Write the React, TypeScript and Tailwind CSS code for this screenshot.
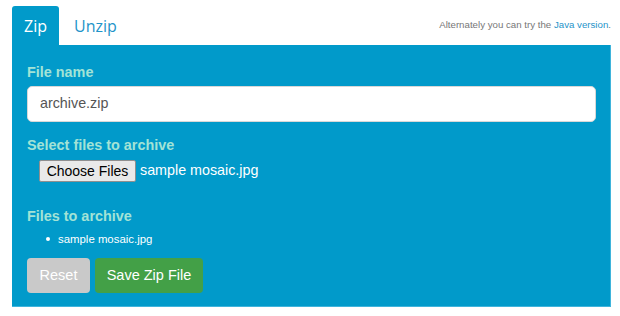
import React from "react";

export default function App() {
  return (
    <div className="w-[620px] h-[316px] bg-white relative" style={{ fontFamily: '"Liberation Sans", Arial, sans-serif' }}>
      <div className="pt-[6px] pl-[12px] pr-[9px]">
        <div className="flex items-end h-[39px]">
          <div className="w-[47px] h-[39px] bg-[#019aca] rounded-t-[3px] flex items-center justify-center text-white text-[16px]" style={{ fontFamily: '"Open Sans", sans-serif' }}>
            Zip
          </div>
          <div className="h-[39px] flex items-center pl-[15px] text-[#1f94c9] text-[16px]" style={{ fontFamily: '"Open Sans", sans-serif' }}>
            Unzip
          </div>
          <div className="flex-1" />
          <div className="h-[39px] flex items-center text-[9.7px] text-[#777] pb-[1px]">
            Alternately you can try the&nbsp;<span className="text-[#1f94c9]">Java version</span>.
          </div>
        </div>
        <div className="bg-[#019aca] h-[262px] border-r border-b border-[#3fb4dc] px-[15px] pt-[19px]">
          <div className="text-[#a3e3d6] font-bold text-[14.4px] leading-[16px]">File name</div>
          <div className="mt-[6px] h-[36px] w-[569px] bg-white rounded-[5px] border border-[#d8d8d8] flex items-center pl-[12px] text-[14.3px] text-[#555]">
            archive.zip
          </div>
          <div className="mt-[15px] text-[#a3e3d6] font-bold text-[14.4px] leading-[16px]">Select files to archive</div>
          <div className="mt-[7px] ml-[12px] flex items-center">
            <div className="h-[22px] w-[97px] bg-[#e9e9e9] border border-[#8f8f8f] rounded-[2px] flex items-center justify-center text-[14px] text-black">
              Choose Files
            </div>
            <div className="ml-[4px] text-white text-[14.3px]">sample mosaic.jpg</div>
          </div>
          <div className="mt-[26px] text-[#a3e3d6] font-bold text-[14.4px] leading-[16px]">Files to archive</div>
          <ul className="mt-[8px] ml-[19px] text-white text-[11.4px] leading-[14px]">
            <li className="flex items-center">
              <span className="w-[4px] h-[4px] rounded-full bg-white mr-[8px]" />
              sample mosaic.jpg
            </li>
          </ul>
          <div className="mt-[12px] flex gap-[5px]">
            <div className="h-[35px] w-[63px] bg-[#c9c9c9] rounded-[4px] flex items-center justify-center text-white text-[14.5px]">
              Reset
            </div>
            <div className="h-[35px] w-[108px] bg-[#43a047] rounded-[4px] flex items-center justify-center text-white text-[14.5px]">
              Save Zip File
            </div>
          </div>
        </div>
      </div>
    </div>
  );
}
